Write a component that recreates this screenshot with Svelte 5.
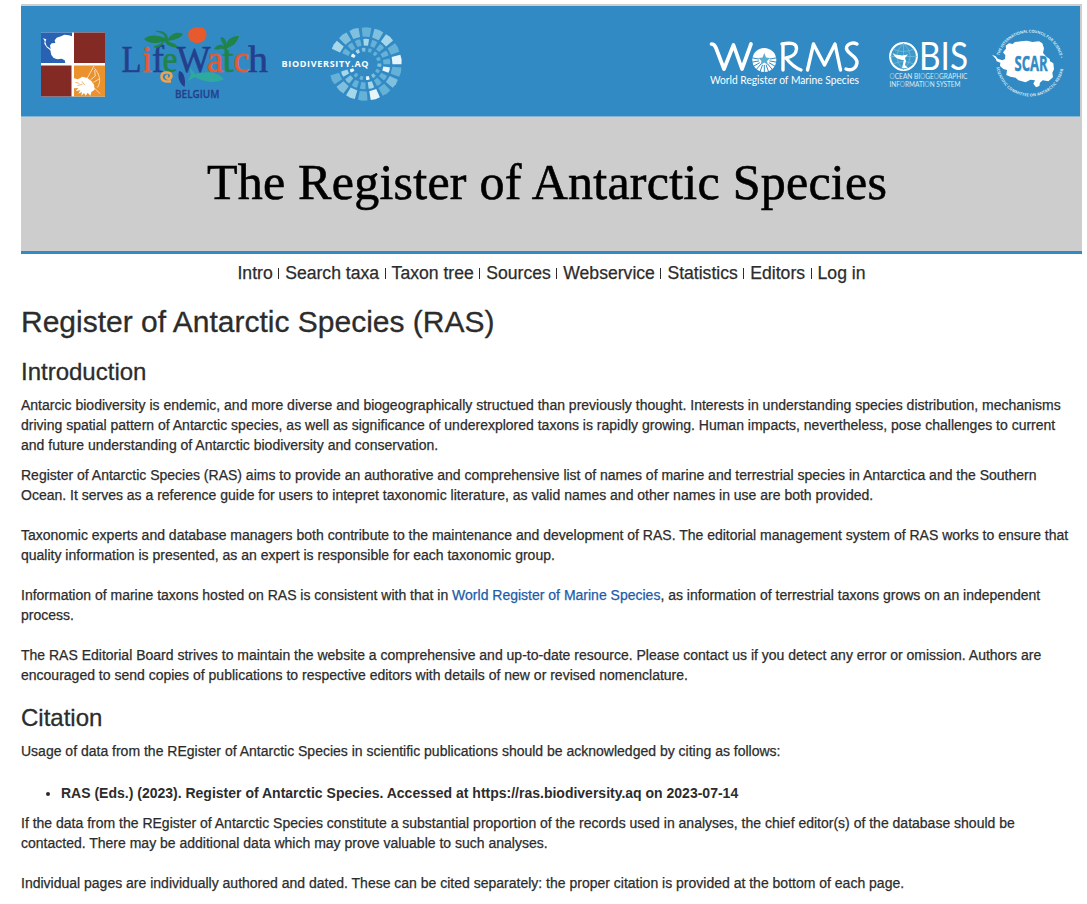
<script>
  const links = ['Intro', 'Search taxa', 'Taxon tree', 'Sources', 'Webservice', 'Statistics', 'Editors', 'Log in'];

  const rings = [
    { r0: 27.5, r1: 36.5, from: -148, to: 154, n: 16, half: 7.5, tones: [0.65, 0.4, 0.4, 0.3, 0.45, 0.6, 0.3, 0.95, 0.32, 0.5, 0.32, 0.9, 0.3, 0.6, 0.45, 0.35] },
    { r0: 18.5, r1: 25, from: -148, to: 156, n: 16, half: 6.6, tones: [0.35, 0.3, 0.35, 0.65, 0.35, 0.3, 0.3, 0.28, 0.9, 0.35, 0.3, 0.6, 0.3, 0.3, 0.4, 0.7] },
    { r0: 12.5, r1: 16, from: -145, to: 154, n: 13, half: 6.6, tones: [0.9, 0.8, 0.4, 0.35, 0.3, 0.35, 0.4, 0.35, 0.4, 0.9, 0.3, 0.35, 0.9] }
  ];
  const pt = (r, a) => `${(365 + r * Math.cos(a * Math.PI / 180)).toFixed(2)} ${(64 + r * Math.sin(a * Math.PI / 180)).toFixed(2)}`;
  const tiles = rings.flatMap(g => g.tones.map((o, i) => {
    const a = g.from + i * (g.to - g.from) / (g.n - 1);
    const h = g.half;
    return { o, d: `M${pt(g.r0, a - h)}L${pt(g.r1, a - h)}L${pt(g.r1 + .4, a)}L${pt(g.r1, a + h)}L${pt(g.r0, a + h)}Z` };
  }));
  const rays = Array.from({ length: 11 }, (_, i) => {
    const a = (-10 + i * 20) * Math.PI / 180;
    return { x: 764.3 + 13 * Math.cos(a), y: 60 + 13 * Math.sin(a) };
  });
</script>

<div class="page">
  <header>
    <div class="logos">
      <svg viewBox="21 6 1059 110" width="1059" height="110">
        <!-- four-square emblem -->
        <g>
          <rect x="41" y="32.5" width="64" height="64" fill="#fff" />
          <rect x="41" y="32.5" width="31" height="30.5" fill="#2962b2" />
          <rect x="74" y="32.5" width="31" height="30.5" fill="#832a25" />
          <rect x="41" y="65.5" width="30.5" height="31" fill="#832a25" />
          <rect x="74" y="65.5" width="31" height="31" fill="#ec922d" />
          <g transform="translate(15 0) scale(.33333)" fill="#fff">
            <path d="M84 115L94 118L91 126L95 138L107 147L105 136L110 130L121 129L119 121L125 113L138 109L148 104L162 106L171 109V189H151L149 181L140 176L127 178L116 174L109 165L106 151L95 142L88 131L89 123Z" />
            <path d="M177 235L189 238L202 230L217 234L229 243L237 254L239 269L229 276L226 287L218 278L212 287L207 279L199 287L201 276L190 281L196 271L182 273L190 264L177 265Z" />
            <path d="M217 234L237 198M227 239L241 228L239 210M235 247L253 237M238 264L255 281M247 263C260 245 253 222 239 205" fill="none" stroke="#fff" stroke-width="2" />
            <path d="M181 247L193 250M187 257L203 252M201 244L209 255" stroke="#ec922d" stroke-width="2" />
          </g>
        </g>

        <!-- LifeWatch -->
        <g>
          <g font-family="'Liberation Serif', serif" font-size="37" fill="#243f8c" stroke="#243f8c" stroke-width=".6">
            <text x="121.5" y="72" textLength="20" lengthAdjust="spacingAndGlyphs">L</text>
            <text x="142" y="72" font-size="38" textLength="10" lengthAdjust="spacingAndGlyphs" fill="#e65a2d" stroke="#e65a2d">i</text>
            <text x="152" y="72" textLength="12" lengthAdjust="spacingAndGlyphs">f</text>
            <text x="162.5" y="72" textLength="15" lengthAdjust="spacingAndGlyphs" fill="#208348" stroke="#208348">e</text>
            <text x="176.5" y="72" textLength="34" lengthAdjust="spacingAndGlyphs">W</text>
            <text x="207" y="72" textLength="16" lengthAdjust="spacingAndGlyphs" fill="#e65a2d" stroke="#e65a2d">a</text>
            <text x="222.5" y="72" textLength="11" lengthAdjust="spacingAndGlyphs" fill="#208348" stroke="#208348">t</text>
            <text x="233.5" y="72" textLength="15.5" lengthAdjust="spacingAndGlyphs" fill="#e65a2d" stroke="#e65a2d">c</text>
            <text x="248" y="72" textLength="20" lengthAdjust="spacingAndGlyphs">h</text>
          </g>
          <path d="M188.5 32C190 27 204 25 206 31C208 39 203 43.500 196 43C189 42 187.500 37 188.500 32Z" fill="#e65a2d" />
          <g fill="#208348">
            <path d="M144 39C149 34 158 35 165 38C164 33 160 33 155 31C162 30 168 33 168 39C173 32 179 32 183 34C180 39 173 40 168 41C170 43 176 43 178 47C172 49 166 44 164 41C158 44 148 44 144 39Z" />
            <path d="M224 46C222 41 220 40 221 37C225 37 227 42 226 45C228 38 233 36 239 36C237 44 231 47 227 48V54H224.500V50C221 47 218 51 214 49C217 44 222 44 224 46Z" />
            <path d="M165 40C163 45 160 48 154 48V46C160 45 162 43 163 40Z" />
          </g>
          <path d="M179 71C184 71 186 80 184.500 87C179 83 177.500 77 179 71Z" fill="#243f8c" />
          <path d="M189.500 67L195 74C205 71 216 71 224 79C216 84 203 82 195 77L187.500 81L191 75Z" fill="#2ea99e" />
          <path d="M171 81.500H166C160 80 160 73 166 72.500C172 72 173 77 169 79C166 79 165 76 168 75.500" fill="none" stroke="#eda34f" stroke-width="2.6" />
          <text x="175" y="98" textLength="44.5" lengthAdjust="spacingAndGlyphs" font-family="'Open Sans', sans-serif" font-size="11.5" font-weight="600" fill="#243f8c" stroke="#243f8c" stroke-width=".3">BELGIUM</text>
        </g>

        <!-- biodiversity.aq -->
        <g fill="#fff">
          {#each tiles as t}
            <path d={t.d} fill={t.o > .8 ? '#e5f5fb' : t.o > .5 ? '#a7d7eb' : t.o > .38 ? '#80c0df' : '#65b1d7'} />
          {/each}
          <text x="281.5" y="66.8" textLength="87" font-family="'Open Sans', sans-serif" font-weight="700" font-size="9">BIODIVERSITY.AQ</text>
        </g>

        <!-- WoRMS -->
        <g fill="#fff">
          <g fill="none" stroke="#fff" stroke-width="3.4" stroke-linecap="round" stroke-linejoin="round">
            <path d="M711.500 44Q714.500 44 716 48L724 69L733.500 45L742 69L751 44" stroke-width="3.700" />
            <path d="M783 70V44M782 44Q797 41 796.500 49Q796 56 786 58Q793 67 801 70" />
            <path d="M807.500 70L813.500 44L824.500 65L835 44L840.500 70" />
            <path d="M857 44C851 41 844.500 46 847 50C849 55 857.500 56 857 63C856 69 851 71 846 69" />
          </g>
          <circle cx="764.3" cy="60" r="12" />
          {#each rays as r}
            <path d={`M764.3 60L${r.x} ${r.y}`} stroke="#328ac4" stroke-width="1" />
          {/each}
          <circle cx="764.3" cy="59.500" r="5.500" />
          <path d="M764.300 53L766 57.500L770 58L767 61L768 65L764.300 62.500L760.500 65L761.500 61L758.500 58L762.500 57.500Z" fill="#58afd1" />
          <text x="710" y="84" textLength="149" lengthAdjust="spacingAndGlyphs" font-family="Lato, sans-serif" font-size="10.800">World Register of Marine Species</text>
        </g>

        <!-- OBIS -->
        <g fill="#fff">
          <circle cx="903.5" cy="56.5" r="13.4" fill="#3f9aca" stroke="#fff" stroke-width="2" />
          <path d="M903.5 43V70M890 56.5H917M893 49Q903 54 914 49M893 64Q903 59 914 64M903.5 43Q890 56 903.5 70M903.5 43Q917 56 903.5 70" fill="none" stroke="#79bddf" stroke-width=".7" />
          <path d="M892.500 53C897 56 899 54.500 902 55.500L908 54.500L905 58L906 61L905 65L908 68H902L904 60C899 60 895 58 892.500 53Z" />
          <text x="919" y="70" textLength="49" lengthAdjust="spacingAndGlyphs" font-family="Lato, sans-serif" font-size="38.500">BIS</text>
          <g font-family="Lato, sans-serif" font-size="7.2" fill="#d5ecf7">
            <text x="889.5" y="79.2" textLength="78" lengthAdjust="spacingAndGlyphs"><tspan opacity=".6">O</tspan>CEAN BI<tspan opacity=".6">O</tspan>GE<tspan opacity=".6">O</tspan>GRAPHIC</text>
            <text x="889.5" y="86.5" textLength="71" lengthAdjust="spacingAndGlyphs">INF<tspan opacity=".6">O</tspan>RMATI<tspan opacity=".6">O</tspan>N SYSTEM</text>
          </g>
        </g>

        <!-- SCAR -->
        <g fill="#fff">
          <path transform="translate(980 0) scale(.33333)" d="M36 164L47 169L53 176L67 181L75 177L76 166L69 157L78 146L77 137L87 130L98 132L105 126L123 124L141 122L157 126L177 124L187 130L192 145L189 159L200 171L209 177L210 184L220 190L222 208L217 218L219 232L205 244L188 241L180 248L178 258L168 262L160 251L165 241L151 239L137 247L115 241L107 233L91 230L79 225L81 210L70 207L60 198L61 188L50 184L47 176Z" />
          <text x="1014.500" y="71" textLength="33" lengthAdjust="spacingAndGlyphs" font-family="'Open Sans', sans-serif" font-weight="700" font-size="22" fill="#328ac4" stroke="#328ac4" stroke-width=".5">SCAR</text>
          <path id="scar-top" d="M999.300 55.500A31.300 31.300 0 0 1 1060.700 66" fill="none" />
          <path id="scar-bottom" d="M996.5 67A33.800 33.800 0 0 0 1063.400 68" fill="none" />
          <g font-family="'Open Sans', sans-serif" font-size="3.9" font-weight="700" fill="#d0e9f5">
            <text><textPath href="#scar-top" textLength="84">THE INTERNATIONAL COUNCIL FOR SCIENCE •</textPath></text>
            <text><textPath href="#scar-bottom" textLength="101">SCIENTIFIC COMMITTEE ON ANTARCTIC RESEARCH</textPath></text>
          </g>
        </g>
      </svg>
    </div>
    <div class="title">The Register of Antarctic Species</div>
  </header>
  <nav>{#each links as link, i}{#if i}<i></i>{/if}<a href="#top">{link}</a>{/each}</nav>
  <main>
    <h1>Register of Antarctic Species (RAS)</h1>
    <h2>Introduction</h2>
    <p>Antarcic biodiversity is endemic, and more diverse and biogeographically structued than previously thought. Interests in understanding species distribution, mechanisms<br />driving spatial pattern of Antarctic species, as well as significance of underexplored taxons is rapidly growing. Human impacts, nevertheless, pose challenges to current<br />and future understanding of Antarctic biodiversity and conservation.</p>
    <p>Register of Antarctic Species (RAS) aims to provide an authorative and comprehensive list of names of marine and terrestrial species in Antarctica and the Southern<br />Ocean. It serves as a reference guide for users to intepret taxonomic literature, as valid names and other names in use are both provided.<br /><br />Taxonomic experts and database managers both contribute to the maintenance and development of RAS. The editorial management system of RAS works to ensure that<br />quality information is presented, as an expert is responsible for each taxonomic group.<br /><br />Information of marine taxons hosted on RAS is consistent with that in <a href="#worms">World Register of Marine Species</a>, as information of terrestrial taxons grows on an independent<br />process.<br /><br />The RAS Editorial Board strives to maintain the website a comprehensive and up-to-date resource. Please contact us if you detect any error or omission. Authors are<br />encouraged to send copies of publications to respective editors with details of new or revised nomenclature.</p>
    <h2 class="citation">Citation</h2>
    <p>Usage of data from the REgister of Antarctic Species in scientific publications should be acknowledged by citing as follows:</p>
    <ul><li>RAS (Eds.) (2023). Register of Antarctic Species. Accessed at https://ras.biodiversity.aq on 2023-07-14</li></ul>
    <p>If the data from the REgister of Antarctic Species constitute a substantial proportion of the records used in analyses, the chief editor(s) of the database should be<br />contacted. There may be additional data which may prove valuable to such analyses.<br /><br />Individual pages are individually authored and dated. These can be cited separately: the proper citation is provided at the bottom of each page.</p>
  </main>
</div>

<style>
  :global(body) { background: #fff; overflow: hidden; }
  .page {
    box-sizing: border-box;
    width: 1087px;
    height: 904px;
    overflow: hidden;
    padding: 4px 5px 0 21px;
    color: #2c2c2c;
    font: 14px/20px "Liberation Sans", Arial, sans-serif;
    -webkit-text-stroke: .25px currentColor;
  }
  header { background: #cdcdcd; padding-top: 2px; border-bottom: 3px solid #328ac4; height: 245px; }
  .logos { width: 1059px; height: 110px; background: #328ac4; border-bottom: 1px solid #84b5d3; -webkit-text-stroke: 0; }
  svg { display: block; }
  .title {
    padding-right: 9px;
    color: #000;
    font: 50px/130px "Liberation Serif", serif;
    letter-spacing: .25px;
    text-align: center;
    white-space: nowrap;
    -webkit-text-stroke: .6px #000;
  }
  nav { display: flex; justify-content: center; align-items: center; height: 38px; font-size: 17.6px; white-space: nowrap; }
  nav i { width: 1px; height: 11px; margin: 1px 6px 0 5.500px; background: #2c2c2c; }
  nav a { color: inherit; text-decoration: none; }
  h1, h2 { margin: 0; font-weight: 400; -webkit-text-stroke: .3px currentColor; }
  h1 { font-size: 30px; line-height: 40px; padding-top: 10px; }
  h2 { font-size: 24px; line-height: 34px; margin-top: 13px; margin-bottom: 6px; }
  h2.citation { margin-top: 16px; }
  p { margin: 0 0 10px; white-space: nowrap; }
  main a { color: #225ba8; text-decoration: none; }
  ul { margin: 22px 0 10px; padding-left: 40px; font-weight: 700; -webkit-text-stroke: 0; }
</style>
